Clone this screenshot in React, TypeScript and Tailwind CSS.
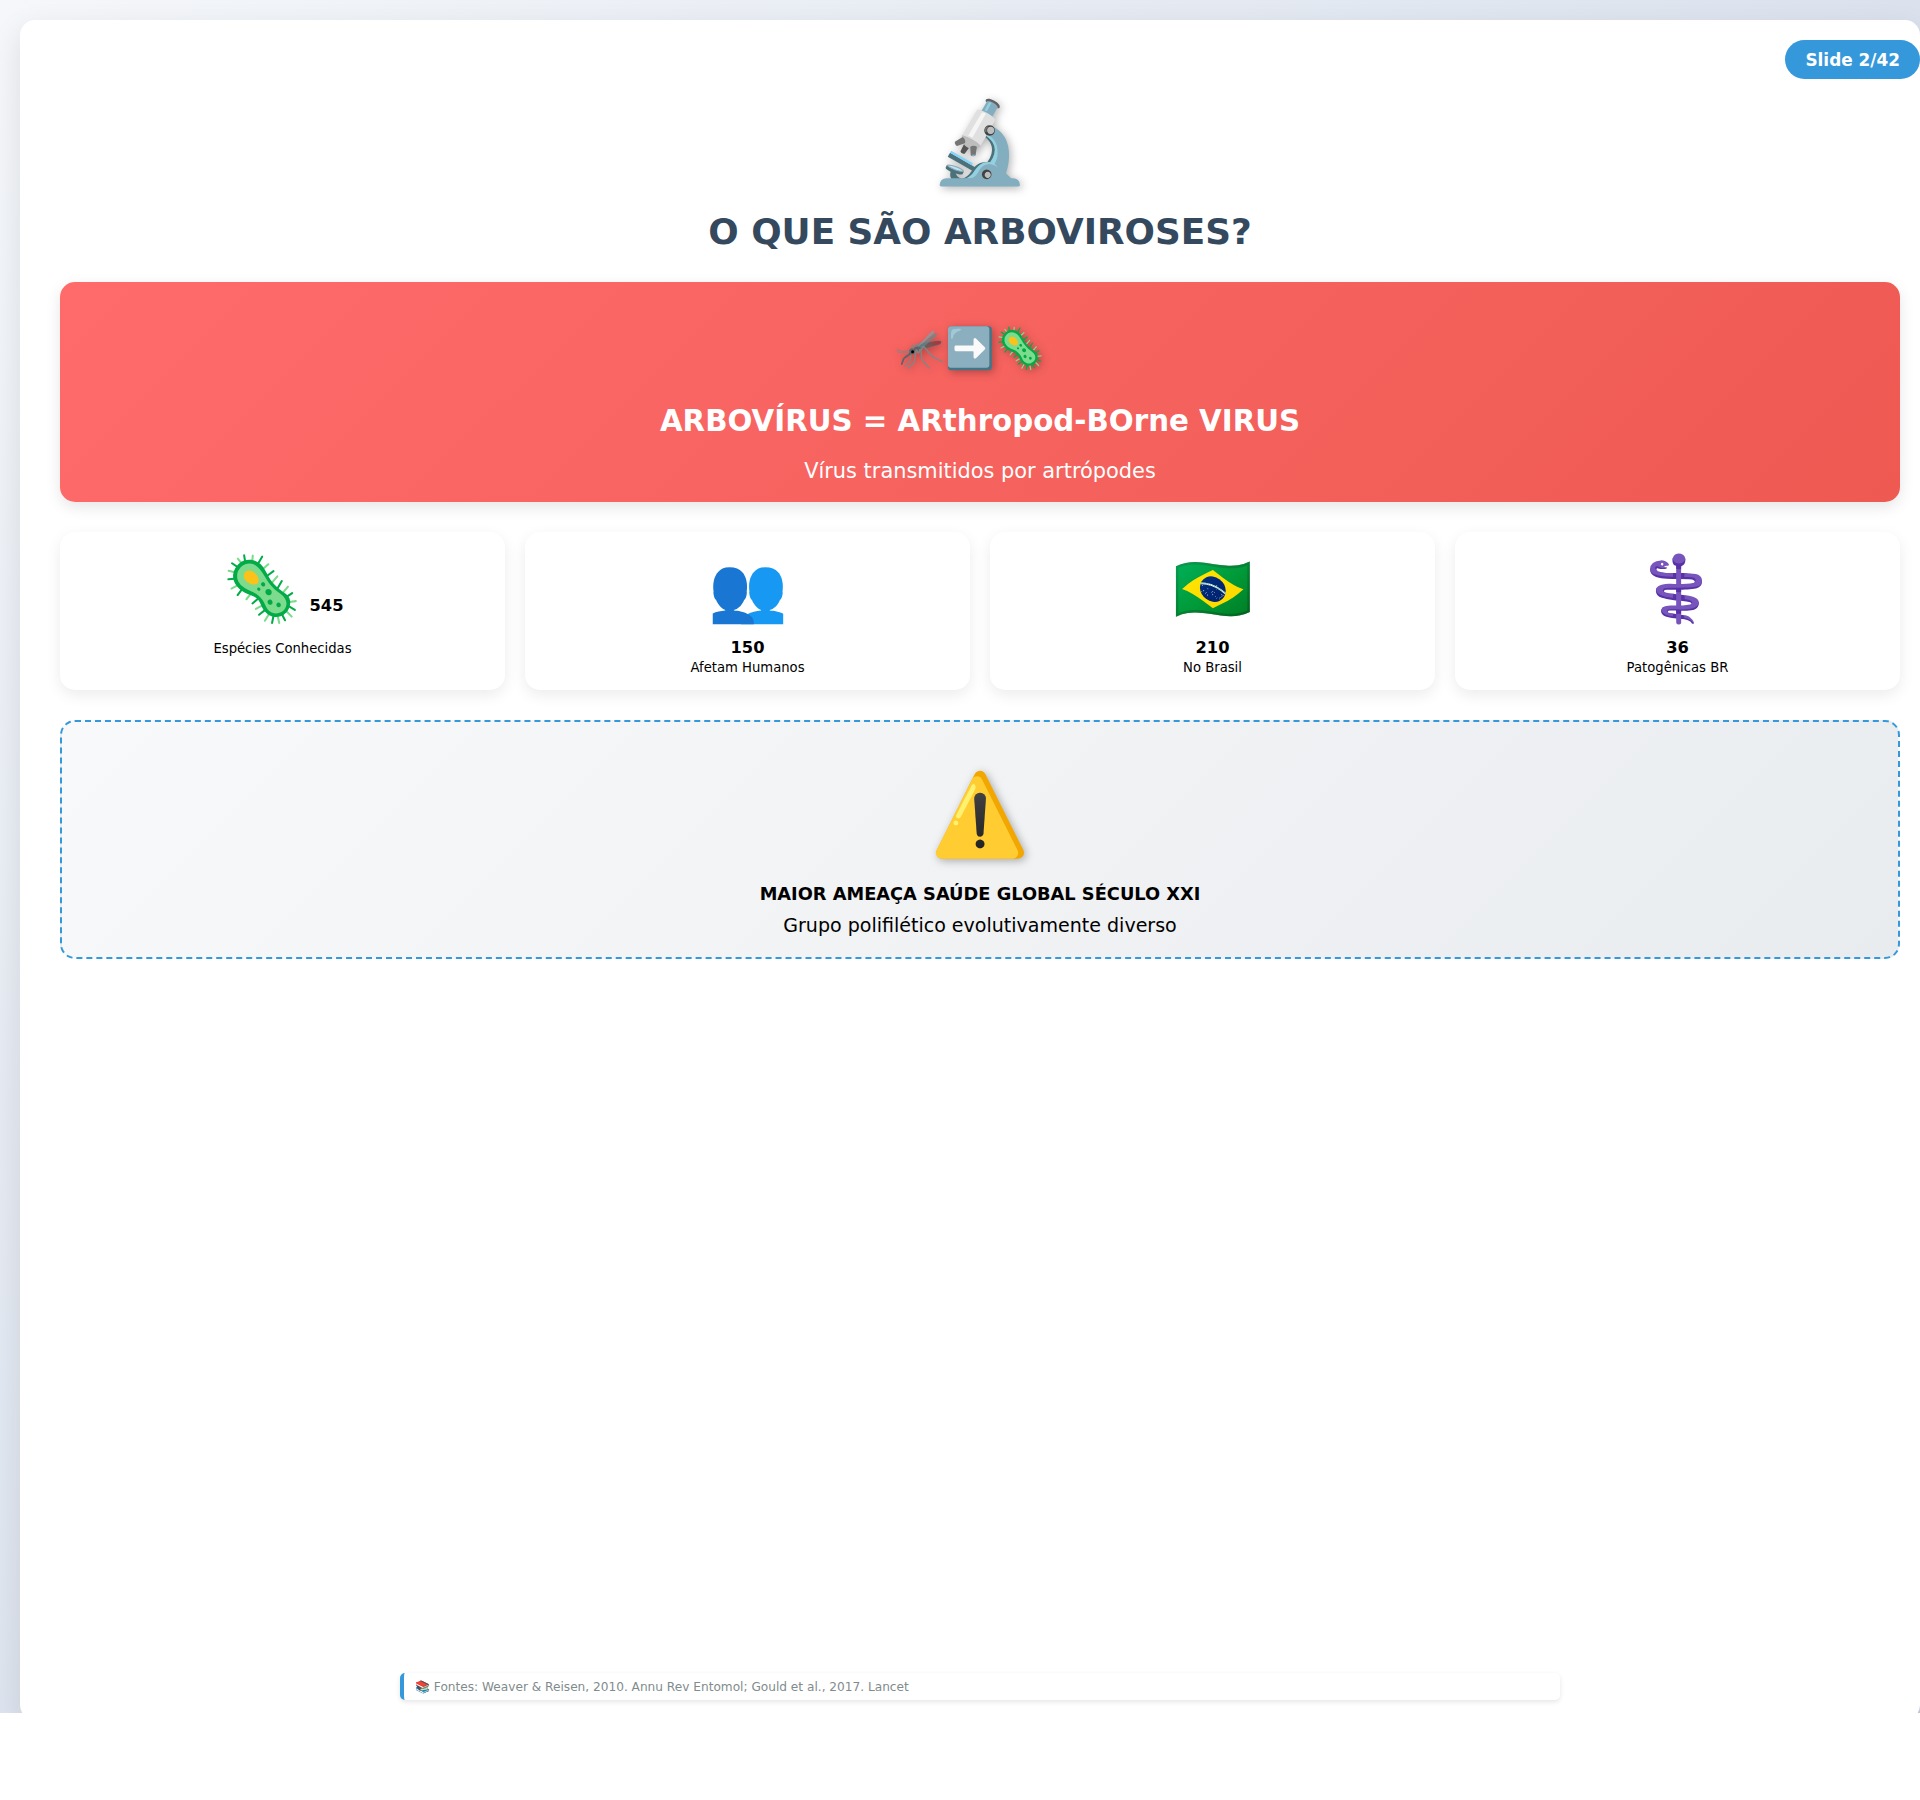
import React from "react";

const font = { fontFamily: '"DejaVu Sans", sans-serif' };

interface StatProps {
  icon: string;
  value: string;
  label: string;
  inline?: boolean;
}

const Stat: React.FC<StatProps> = ({ icon, value, label, inline }) => (
  <div className="flex h-[158px] flex-col items-center rounded-[15px] bg-white px-5 pt-5 text-black shadow-[0_5px_15px_rgba(0,0,0,0.08)]">
    {inline ? (
      <>
        <div className="flex items-end">
          <span className="text-[64px] leading-[75px]">{icon}</span>
          <span className="mb-[11px] ml-[8px] text-[16.3px] font-bold leading-[21px]">{value}</span>
        </div>
        <div className="mt-[14px] text-[13.2px] leading-[16px]">{label}</div>
      </>
    ) : (
      <>
        <span className="text-[64px] leading-[75px]">{icon}</span>
        <div className="mt-[10px] text-[16.3px] font-bold leading-[21px]">{value}</div>
        <div className="mt-[1px] text-[13.2px] leading-[17px]">{label}</div>
      </>
    )}
  </div>
);

export default function App() {
  return (
    <div
      style={font}
      className="h-[1713px] overflow-hidden bg-[linear-gradient(135deg,#f5f7fa_0%,#c3cfe2_100%)] pl-5 pt-5"
    >
      <div className="relative flex h-[1700px] w-full flex-col rounded-[15px] bg-white pb-[20px] pl-10 pr-5 pt-[76px] shadow-[0_10px_30px_rgba(0,0,0,0.1)]">
        <div className="absolute right-0 top-5 rounded-[20px] bg-[#3498db] px-5 pb-[9px] pt-[11px] text-[16.9px] font-bold leading-[19px] text-white">
          Slide 2/42
        </div>

        <div className="text-center">
          <div className="text-[80px] leading-[94px] [filter:drop-shadow(2px_2px_4px_rgba(0,0,0,0.3))]">🔬</div>
          <h1 className="mb-[-1px] mt-[21px] text-[35.8px] font-bold leading-[42px] text-[#34495e]">O QUE SÃO ARBOVIROSES?</h1>
        </div>

        <div className="mt-[30px] h-[220px] rounded-[15px] bg-[linear-gradient(135deg,#ff6b6b,#ee5a52)] pt-[43px] text-center text-white shadow-[0_5px_15px_rgba(0,0,0,0.1)]">
          <div className="pr-[20px] text-[40px] leading-[47px] [filter:drop-shadow(2px_2px_4px_rgba(0,0,0,0.3))]">🦟➡️🦠</div>
          <div className="mt-[30px] text-[29.3px] font-bold leading-[38px]">ARBOVÍRUS = ARthropod-BOrne VIRUS</div>
          <div className="mt-[18px] text-[20.9px] leading-[26px]">Vírus transmitidos por artrópodes</div>
        </div>

        <div className="mt-[30px] grid grid-cols-4 gap-5">
          <Stat icon="🦠" value="545" label="Espécies Conhecidas" inline />
          <Stat icon="👥" value="150" label="Afetam Humanos" />
          <Stat icon="🇧🇷" value="210" label="No Brasil" />
          <Stat icon="⚕️" value="36" label="Patogênicas BR" />
        </div>

        <div className="mt-[30px] h-[239px] rounded-[15px] border-2 border-dashed border-[#3498db] bg-[linear-gradient(135deg,#f8f9fa,#e9ecef)] pt-[46px] text-center text-black">
          <div className="text-[80px] leading-[94px] [filter:drop-shadow(2px_2px_4px_rgba(0,0,0,0.3))]">⚠️</div>
          <div className="mt-[21px] text-[17.8px] font-bold leading-[21px]">MAIOR AMEAÇA SAÚDE GLOBAL SÉCULO XXI</div>
          <div className="mt-[10px] text-[19.05px] leading-[23px]">Grupo polifilético evolutivamente diverso</div>
        </div>

        <div className="mt-auto w-[1160px] self-center rounded-[5px] border-l-4 border-[#3498db] bg-white pb-[5px] pl-[11px] pr-[12px] pt-[7px] text-[12.15px] leading-[15px] text-[#7f8c8d] shadow-[0_2px_5px_rgba(0,0,0,0.1)]">
          📚 Fontes: Weaver &amp; Reisen, 2010. Annu Rev Entomol; Gould et al., 2017. Lancet
        </div>
      </div>
    </div>
  );
}
